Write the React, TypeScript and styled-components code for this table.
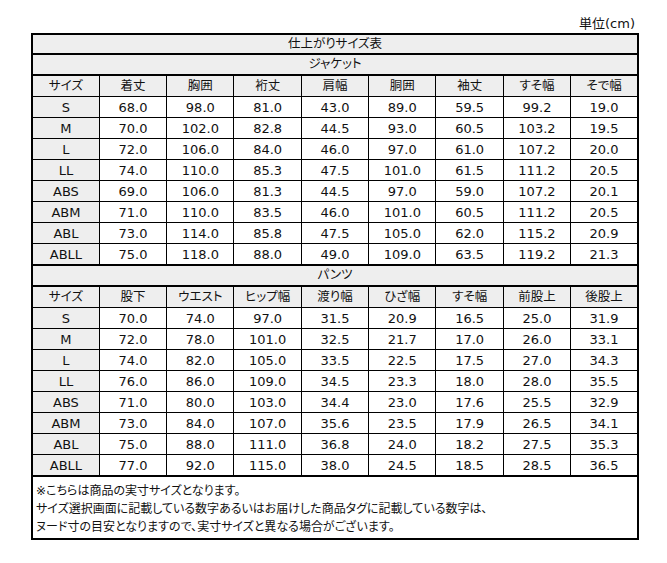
import React from "react";
import styled, { createGlobalStyle } from "styled-components";

const GlobalStyle = createGlobalStyle`
  html, body { margin: 0; padding: 0; background: #ffffff; }
  body {
    font-family: "DejaVu Sans", "Noto Sans CJK JP", sans-serif;
    color: #111111;
  }
`;

const Page = styled.div`
  width: 608px;
  margin: 0 0 0 31px;
  padding-top: 15px;
`;

const Unit = styled.div`
  text-align: right;
  font-size: 13px;
  line-height: 18px;
  height: 18px;
  padding-right: 4px;
  font-feature-settings: "palt" 1;
`;

const Table = styled.table`
  width: 608px;
  table-layout: fixed;
  border-collapse: collapse;
  border: 2px solid #000;
  font-size: 13px;
`;

const SectionCell = styled.td<{ $h: number }>`
  height: ${(p) => p.$h}px;
  padding: 0;
  background: #eeeeee;
  border-top: 2px solid #000;
  border-bottom: 2px solid #000;
  text-align: center;
  font-size: 12.5px;
  font-feature-settings: "palt" 1;
  line-height: 1;
`;

const Cell = styled.td<{ $gray?: boolean }>`
  height: 20px;
  padding: 0;
  border: 1px solid #000;
  background: ${(p) => (p.$gray ? "#eeeeee" : "#ffffff")};
  text-align: center;
  line-height: 1;
  white-space: nowrap;
`;

const HeadCell = styled(Cell)`
  font-size: 12.5px;
  font-feature-settings: "palt" 1;
`;

const NoteCell = styled.td`
  padding: 5px 2px 2px 3px;
  border-top: 2px solid #000;
  text-align: left;
  font-size: 12px;
  line-height: 18px;
  font-feature-settings: "palt" 1;
`;

const jacketHead = ["サイズ", "着丈", "胸囲", "裄丈", "肩幅", "胴囲", "袖丈", "すそ幅", "そで幅"];
const jacketRows: string[][] = [
  ["S", "68.0", "98.0", "81.0", "43.0", "89.0", "59.5", "99.2", "19.0"],
  ["M", "70.0", "102.0", "82.8", "44.5", "93.0", "60.5", "103.2", "19.5"],
  ["L", "72.0", "106.0", "84.0", "46.0", "97.0", "61.0", "107.2", "20.0"],
  ["LL", "74.0", "110.0", "85.3", "47.5", "101.0", "61.5", "111.2", "20.5"],
  ["ABS", "69.0", "106.0", "81.3", "44.5", "97.0", "59.0", "107.2", "20.1"],
  ["ABM", "71.0", "110.0", "83.5", "46.0", "101.0", "60.5", "111.2", "20.5"],
  ["ABL", "73.0", "114.0", "85.8", "47.5", "105.0", "62.0", "115.2", "20.9"],
  ["ABLL", "75.0", "118.0", "88.0", "49.0", "109.0", "63.5", "119.2", "21.3"],
];

const pantsHead = ["サイズ", "股下", "ウエスト", "ヒップ幅", "渡り幅", "ひざ幅", "すそ幅", "前股上", "後股上"];
const pantsRows: string[][] = [
  ["S", "70.0", "74.0", "97.0", "31.5", "20.9", "16.5", "25.0", "31.9"],
  ["M", "72.0", "78.0", "101.0", "32.5", "21.7", "17.0", "26.0", "33.1"],
  ["L", "74.0", "82.0", "105.0", "33.5", "22.5", "17.5", "27.0", "34.3"],
  ["LL", "76.0", "86.0", "109.0", "34.5", "23.3", "18.0", "28.0", "35.5"],
  ["ABS", "71.0", "80.0", "103.0", "34.4", "23.0", "17.6", "25.5", "32.9"],
  ["ABM", "73.0", "84.0", "107.0", "35.6", "23.5", "17.9", "26.5", "34.1"],
  ["ABL", "75.0", "88.0", "111.0", "36.8", "24.0", "18.2", "27.5", "35.3"],
  ["ABLL", "77.0", "92.0", "115.0", "38.0", "24.5", "18.5", "28.5", "36.5"],
];

const Block: React.FC<{ title: string; head: string[]; rows: string[][]; h: number }> = ({ title, head, rows, h }) => (
  <>
    <tr>
      <SectionCell colSpan={9} $h={h}>{title}</SectionCell>
    </tr>
    <tr>
      {head.map((t, i) => (
        <HeadCell key={i} $gray>{t}</HeadCell>
      ))}
    </tr>
    {rows.map((r, ri) => (
      <tr key={ri}>
        {r.map((v, i) => (
          <Cell key={i} $gray={i === 0}>{v}</Cell>
        ))}
      </tr>
    ))}
  </>
);

export default function App() {
  return (
    <>
      <GlobalStyle />
      <Page>
        <Unit>単位(cm)</Unit>
        <Table>
          <tbody>
            <tr>
              <SectionCell colSpan={9} $h={18}>仕上がりサイズ表</SectionCell>
            </tr>
            <Block title="ジャケット" head={jacketHead} rows={jacketRows} h={19} />
            <Block title="パンツ" head={pantsHead} rows={pantsRows} h={19} />
            <tr>
              <NoteCell colSpan={9}>
                ※こちらは商品の実寸サイズとなります。
                <br />
                サイズ選択画面に記載している数字あるいはお届けした商品タグに記載している数字は、
                <br />
                ヌード寸の目安となりますので、実寸サイズと異なる場合がございます。
              </NoteCell>
            </tr>
          </tbody>
        </Table>
      </Page>
    </>
  );
}
